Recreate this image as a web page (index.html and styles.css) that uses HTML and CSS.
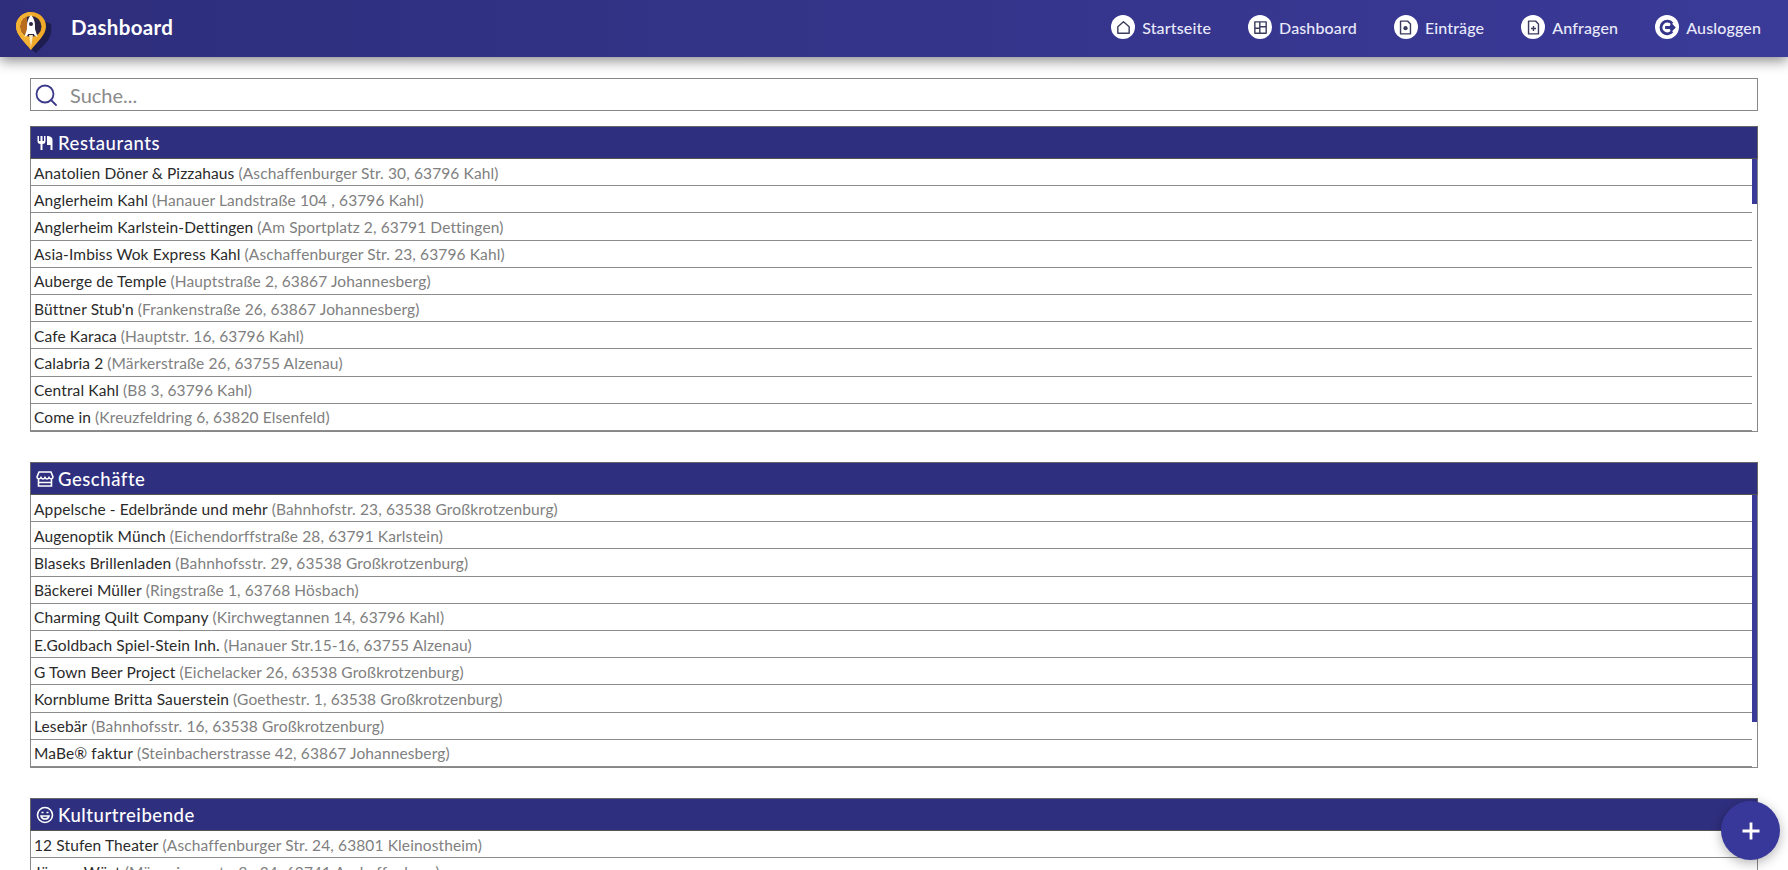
FILE: index.html
```html
<!DOCTYPE html>
<html lang="de">
<head>
<meta charset="utf-8">
<title>Dashboard</title>
<link rel="stylesheet" href="styles.css">
</head>
<body>
<header class="topbar">
  <div class="brand">
    <svg class="logo" viewBox="0 0 40 44" width="40" height="44">
      <path d="M18 6 L36 14 Q38 26 30 34 L21 43 L12 36Z" fill="#1d1d4f"/>
      <path d="M16 2C7.500 2 1 8.500 1 16.500C1 25 10 32 16 40C22 32 31 25 31 16.500C31 8.500 24.500 2 16 2Z" fill="#f0a928"/>
      <path d="M16 2C7.500 2 1 8.500 1 16.500C1 25 10 32 16 40Z" fill="#f3b233"/>
      <circle cx="16" cy="16.500" r="10.500" fill="#2a2440"/>
      <path d="M5.500 16.500A10.500 10.500 0 0 1 12 6.800L12 26A10.500 10.500 0 0 1 5.500 16.500Z" fill="#b96c1e"/>
      <path d="M16 5C19 8 20 12 20 16L20 24L12 24L12 16C12 12 13 8 16 5Z" fill="#fff"/>
      <path d="M12 19L9.500 27L13 25ZM20 19L22.500 27L19 25Z" fill="#fff"/>
      <path d="M14 25L18 25L16 37Z" fill="#fde9c0"/>
      <circle cx="16" cy="14" r="2" fill="#2a2440"/>
    </svg>
    <span class="brand-title">Dashboard</span>
  </div>
  <nav class="nav">
    <a class="nav-item"><span class="nav-icon"><svg viewBox="0 0 24 24" width="17" height="17"><path d="M4 11L12 4L20 11V20H4Z" class="ico"/></svg></span>Startseite</a>
    <a class="nav-item"><span class="nav-icon"><svg viewBox="0 0 24 24" width="17" height="17"><path d="M4 4H20V20H4ZM11 4V20M11 11H20M4 13H11" class="ico"/></svg></span>Dashboard</a>
    <a class="nav-item"><span class="nav-icon"><svg viewBox="0 0 24 24" width="17" height="17"><path d="M5 3H15L19 7V21H5Z" class="ico"/><circle cx="12" cy="13" r="3" class="ico-fill"/></svg></span>Einträge</a>
    <a class="nav-item"><span class="nav-icon"><svg viewBox="0 0 24 24" width="17" height="17"><path d="M5 3H15L19 7V21H5ZM12 10V17M8.500 13.500H15.500" class="ico"/></svg></span>Anfragen</a>
    <a class="nav-item"><span class="nav-icon"><svg viewBox="0 0 24 24" width="19" height="19"><path d="M18 7A8 8 0 1 0 18 17" class="ico-bold"/><path d="M9 12H20M16 8L20 12L16 16" class="ico-bold"/></svg></span>Ausloggen</a>
  </nav>
</header>

<main class="content">
  <div class="search">
    <svg class="search-icon" viewBox="0 0 24 24" width="24" height="24"><circle cx="11" cy="11" r="8.500"/><path d="M17 17L22 22"/></svg>
    <span class="search-text">Suche...</span>
  </div>

  <section class="group">
    <h2 class="group-head">
      <svg class="head-icon" viewBox="0 0 18 18" width="18" height="18"><path d="M1.500 2V7C1.500 9 2.500 10 4.500 10V16H6.500V10C8.500 10 9.500 9 9.500 7V2H8V7H6.500V2H4.500V7H3V2ZM11 2C14 2 16.500 3 16.500 6V16H14.500V11H11Z"/></svg>
      Restaurants
    </h2>
    <div class="list">
      <div class="row"><span class="name">Anatolien Döner &amp; Pizzahaus</span> <span class="addr">(Aschaffenburger Str. 30, 63796 Kahl)</span></div>
      <div class="row"><span class="name">Anglerheim Kahl</span> <span class="addr">(Hanauer Landstraße 104 , 63796 Kahl)</span></div>
      <div class="row"><span class="name">Anglerheim Karlstein-Dettingen</span> <span class="addr">(Am Sportplatz 2, 63791 Dettingen)</span></div>
      <div class="row"><span class="name">Asia-Imbiss Wok Express Kahl</span> <span class="addr">(Aschaffenburger Str. 23, 63796 Kahl)</span></div>
      <div class="row"><span class="name">Auberge de Temple</span> <span class="addr">(Hauptstraße 2, 63867 Johannesberg)</span></div>
      <div class="row"><span class="name">Büttner Stub'n</span> <span class="addr">(Frankenstraße 26, 63867 Johannesberg)</span></div>
      <div class="row"><span class="name">Cafe Karaca</span> <span class="addr">(Hauptstr. 16, 63796 Kahl)</span></div>
      <div class="row"><span class="name">Calabria 2</span> <span class="addr">(Märkerstraße 26, 63755 Alzenau)</span></div>
      <div class="row"><span class="name">Central Kahl</span> <span class="addr">(B8 3, 63796 Kahl)</span></div>
      <div class="row"><span class="name">Come in</span> <span class="addr">(Kreuzfeldring 6, 63820 Elsenfeld)</span></div>
      <div class="thumb" style="height:45px"></div>
    </div>
  </section>

  <section class="group">
    <h2 class="group-head">
      <svg class="head-icon line" viewBox="0 0 18 18" width="18" height="18"><path d="M3 2H15L17 7C17 9 14 9.500 13 7.500C12 9.500 10 9.500 9 7.500C8 9.500 6 9.500 5 7.500C4 9.500 1 9 1 7ZM2.500 9V16H15.500V9M2.500 12.500H15.500"/></svg>
      Geschäfte
    </h2>
    <div class="list">
      <div class="row"><span class="name">Appelsche - Edelbrände und mehr</span> <span class="addr">(Bahnhofstr. 23, 63538 Großkrotzenburg)</span></div>
      <div class="row"><span class="name">Augenoptik Münch</span> <span class="addr">(Eichendorffstraße 28, 63791 Karlstein)</span></div>
      <div class="row"><span class="name">Blaseks Brillenladen</span> <span class="addr">(Bahnhofsstr. 29, 63538 Großkrotzenburg)</span></div>
      <div class="row"><span class="name">Bäckerei Müller</span> <span class="addr">(Ringstraße 1, 63768 Hösbach)</span></div>
      <div class="row"><span class="name">Charming Quilt Company</span> <span class="addr">(Kirchwegtannen 14, 63796 Kahl)</span></div>
      <div class="row"><span class="name">E.Goldbach Spiel-Stein Inh.</span> <span class="addr">(Hanauer Str.15-16, 63755 Alzenau)</span></div>
      <div class="row"><span class="name">G Town Beer Project</span> <span class="addr">(Eichelacker 26, 63538 Großkrotzenburg)</span></div>
      <div class="row"><span class="name">Kornblume Britta Sauerstein</span> <span class="addr">(Goethestr. 1, 63538 Großkrotzenburg)</span></div>
      <div class="row"><span class="name">Lesebär</span> <span class="addr">(Bahnhofsstr. 16, 63538 Großkrotzenburg)</span></div>
      <div class="row"><span class="name">MaBe® faktur</span> <span class="addr">(Steinbacherstrasse 42, 63867 Johannesberg)</span></div>
      <div class="thumb" style="height:227px"></div>
    </div>
  </section>

  <section class="group">
    <h2 class="group-head">
      <svg class="head-icon line" viewBox="0 0 18 18" width="18" height="18"><circle cx="9" cy="9" r="7.500"/><path d="M5 10C6 14 12 14 13 10ZM5.500 6.500H7.500M10.500 6.500H12.500"/></svg>
      Kulturtreibende
    </h2>
    <div class="list">
      <div class="row"><span class="name">12 Stufen Theater</span> <span class="addr">(Aschaffenburger Str. 24, 63801 Kleinostheim)</span></div>
      <div class="row"><span class="name">Jürgen Wüst</span> <span class="addr">(Märzwiesenstraße 34, 63741 Aschaffenburg)</span></div>
    </div>
  </section>
</main>

<button class="fab" aria-label="Hinzufügen"><svg viewBox="0 0 20 20" width="20" height="20"><path d="M10 1.500V18.500M1.500 10H18.500"/></svg></button>
</body>
</html>
```
FILE: styles.css
```css
* { box-sizing: border-box; }
html, body { margin: 0; height: 100%; }
body {
  display: flex;
  flex-direction: column;
  height: 100vh;
  overflow: hidden;
  background: #fff;
  font-family: "Lato", "Open Sans", sans-serif;
  color: #222;
}
.topbar {
  position: relative;
  z-index: 2;
  flex: none;
  height: 57px;
  display: flex;
  align-items: center;
  justify-content: space-between;
  padding: 0 27px 3px 15px;
  background: linear-gradient(90deg, #2e2e7c, #3a3a98);
  box-shadow: 0 4px 12px rgba(0, 0, 0, .45);
}
.brand { display: flex; align-items: center; gap: 23px; }
.logo { display: block; margin-top: 10px; }
.brand-title { font-size: 20.500px; font-weight: 700; color: #fff; letter-spacing: .35px; margin-left: -7px; }
.nav { display: flex; align-items: center; gap: 37px; }
.nav-item { display: flex; align-items: center; gap: 7px; font-size: 16px; font-weight: 500; color: #e9e9fa; letter-spacing: .15px; }
.nav-icon {
  width: 24px; height: 24px; border-radius: 50%;
  background: #fff;
  display: flex; align-items: center; justify-content: center;
}
.ico { fill: none; stroke: #3c3c5e; stroke-width: 2; stroke-linejoin: round; }
.ico-fill { fill: #3c3c5e; }
.ico-bold { fill: none; stroke: #34348a; stroke-width: 3.500; }
.content { flex: 1; min-height: 0; overflow: hidden; padding: 21px 30px 0; }
.search {
  height: 33px;
  display: flex; align-items: center; gap: 12px;
  padding-left: 3px;
  border: 1px solid #888;
  margin-bottom: 15px;
}
.search-icon { fill: none; stroke: #3a3a8a; stroke-width: 1.800; stroke-linecap: round; }
.search-text { font-size: 20px; color: #8a8a8a; }
.group { margin-bottom: 30px; }
.group-head {
  margin: 0;
  height: 33px;
  display: flex; align-items: center; gap: 4px;
  padding-left: 5px;
  background: #2f2f7f;
  border: 1px solid #666;
  border-bottom-color: #555;
  color: #fff;
  font-size: 18.500px;
  font-weight: 500;
  letter-spacing: .55px;
}
.head-icon { fill: #fff; flex: none; }
.head-icon.line { fill: none; stroke: #fff; stroke-width: 1.600; }
.list {
  position: relative;
  height: 273px;
  overflow: hidden;
  padding-right: 5px;
  border: 1px solid #888;
  border-top: 0;
}
.thumb {
  position: absolute;
  top: 0;
  right: -1px;
  width: 6px;
  background: #3a3a98;
}
.row {
  height: 27.200px;
  display: flex; align-items: center; gap: 4px;
  padding: 1px 0 0 3px;
  border-bottom: 1px solid #8c8c8c;
  font-size: 15.500px;
  font-weight: 400;
  letter-spacing: .12px;
  white-space: nowrap;
}
.name { color: #2a2a2a; }
.addr { color: #808080; }
.fab {
  position: fixed;
  right: 8px;
  bottom: 10px;
  z-index: 3;
  width: 59px; height: 59px;
  padding: 0;
  border: 0;
  border-radius: 50%;
  background: #38389a;
  box-shadow: 0 3px 12px rgba(0, 0, 0, .3);
  display: flex; align-items: center; justify-content: center;
}
.fab path { stroke: #fff; stroke-width: 2.800; fill: none; }
```
